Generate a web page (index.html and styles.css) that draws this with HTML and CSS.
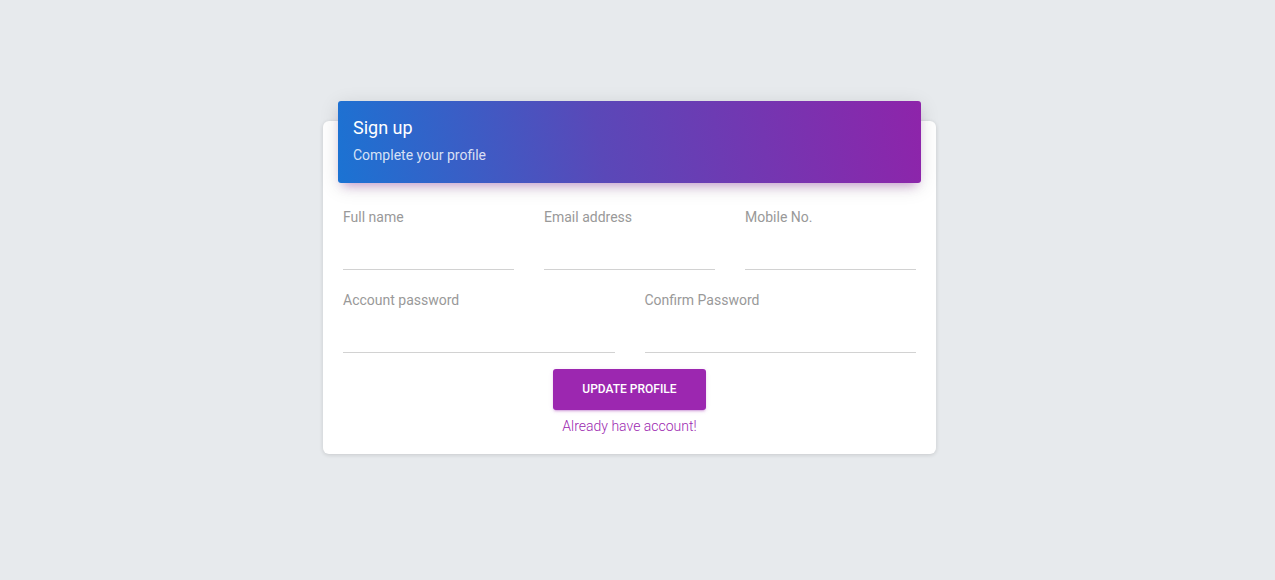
FILE: index.html
```html
<!DOCTYPE html>
<html>
<head>
<meta charset="utf-8">
<link rel="stylesheet" href="styles.css">
</head>
<body>
<div class="page">
  <div class="card">
    <div class="card-header">
      <h4 class="title">Sign up</h4>
      <p class="subtitle">Complete your profile</p>
    </div>
    <form class="card-body">
      <div class="row three">
        <label class="field"><span class="label">Full name</span><input type="text"></label>
        <label class="field"><span class="label">Email address</span><input type="email"></label>
        <label class="field"><span class="label">Mobile No.</span><input type="text"></label>
      </div>
      <div class="row two">
        <label class="field"><span class="label">Account password</span><input type="password"></label>
        <label class="field"><span class="label">Confirm Password</span><input type="password"></label>
      </div>
      <div class="actions">
        <button type="button" class="btn">Update Profile</button>
        <a class="link" href="#">Already have account!</a>
      </div>
    </form>
  </div>
</div>
</body>
</html>
```

FILE: styles.css
```css
html, body {
  margin: 0;
  padding: 0;
}
body {
  background: #e7eaed;
  font-family: Roboto, "Liberation Sans", sans-serif;
  width: 1275px;
  height: 580px;
  overflow: hidden;
}
.page {
  padding: 121px 0 0 323px;
}
.card {
  width: 613px;
  background: #fff;
  border-radius: 6px;
  box-shadow: 0 1px 4px rgba(0, 0, 0, 0.14);
}
.card-header {
  margin: 0 15px;
  position: relative;
  top: -20px;
  margin-bottom: -20px;
  height: 82px;
  box-sizing: border-box;
  padding: 16px 15px;
  border-radius: 3px;
  background: linear-gradient(80deg, #1b73d3 0%, #5a48b8 45%, #8e24aa 100%);
  box-shadow: 0 4px 20px rgba(0, 0, 0, 0.12), 0 7px 10px -5px rgba(156, 39, 176, 0.4);
  color: #fff;
}
.title {
  margin: 0;
  font-size: 18px;
  font-weight: 400;
  line-height: 22px;
}
.subtitle {
  margin: 6px 0 0;
  font-size: 14px;
  line-height: 20px;
  color: rgba(255, 255, 255, 0.82);
  font-weight: 400;
}
.card-body {
  padding: 26px 20px 18px;
  margin: 0;
}
.row {
  display: grid;
  column-gap: 30px;
}
.row.three {
  grid-template-columns: repeat(3, minmax(0, 1fr));
}
.row.two {
  grid-template-columns: repeat(2, minmax(0, 1fr));
  margin-top: 22px;
}
.field {
  display: flex;
  flex-direction: column;
  min-width: 0;
}
.label {
  font-size: 14px;
  line-height: 16px;
  color: #999;
}
.field input {
  width: 100%;
  min-width: 0;
  height: 44px;
  border: 0;
  border-bottom: 1px solid #d2d2d2;
  padding: 0;
  margin: 0;
  background: transparent;
  outline: none;
  box-sizing: content-box;
  font-family: inherit;
  font-size: 14px;
}
.actions {
  display: flex;
  flex-direction: column;
  align-items: center;
  margin-top: 16px;
}
.btn {
  width: 153px;
  height: 41px;
  padding: 0 0 2px;
  border: 0;
  border-radius: 3px;
  background: #9c27b0;
  color: #fff;
  font-family: inherit;
  font-size: 12px;
  font-weight: 500;
  text-transform: uppercase;
  box-shadow: 0 2px 2px 0 rgba(156, 39, 176, 0.14), 0 3px 1px -2px rgba(156, 39, 176, 0.2), 0 1px 5px 0 rgba(156, 39, 176, 0.12);
  cursor: pointer;
}
.link {
  margin-top: 6px;
  font-size: 14px;
  line-height: 20px;
  font-weight: 300;
  color: #9c27b0;
  text-decoration: none;
}
```
